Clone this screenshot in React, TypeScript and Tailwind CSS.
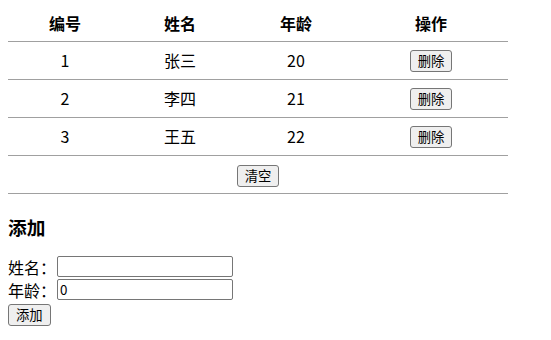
import { useState } from "react";

type Person = { id: number; name: string; age: number };

const INITIAL: Person[] = [
  { id: 1, name: "张三", age: 20 },
  { id: 2, name: "李四", age: 21 },
  { id: 3, name: "王五", age: 22 },
];

const btn =
  "h-[22px] rounded-[3px] border border-[#767676] bg-[#efefef] px-[7px] text-[13.33px] leading-[18px] text-black";

export default function App() {
  const [people, setPeople] = useState<Person[]>(INITIAL);
  const [name, setName] = useState("");
  const [age, setAge] = useState("0");

  function add() {
    if (!name) return;
    const nextId = people.length ? people[people.length - 1].id + 1 : 1;
    setPeople([...people, { id: nextId, name, age: Number(age) || 0 }]);
    setName("");
    setAge("0");
  }

  return (
    <div className="bg-white p-2 text-[16px] text-black [font-family:'Noto_Sans_CJK_SC','Noto_Sans',sans-serif]">
      <table className="w-[500px] table-fixed border-collapse text-center">
        <colgroup>
          <col className="w-[114px]" />
          <col className="w-[116px]" />
          <col className="w-[116px]" />
          <col className="w-[154px]" />
        </colgroup>
        <thead>
          <tr className="h-[33px] border-b border-[#a0a0a0] font-bold leading-[20px]">
            <th className="pb-[2px]">编号</th>
            <th className="pb-[2px]">姓名</th>
            <th className="pb-[2px]">年龄</th>
            <th className="pb-[2px]">操作</th>
          </tr>
        </thead>
        <tbody>
          {people.map((p) => (
            <tr key={p.id} className="h-[38px] border-b border-[#a0a0a0] leading-[20px]">
              <td>{p.id}</td>
              <td>{p.name}</td>
              <td>{p.age}</td>
              <td>
                <button
                  type="button"
                  className={btn}
                  onClick={() => setPeople(people.filter((x) => x.id !== p.id))}
                >
                  删除
                </button>
              </td>
            </tr>
          ))}
          <tr className="h-[38px] border-b border-[#a0a0a0]">
            <td colSpan={4}>
              <button type="button" className={btn} onClick={() => setPeople([])}>
                清空
              </button>
            </td>
          </tr>
        </tbody>
      </table>

      <h3 className="mt-[20px] mb-[17px] text-[18.72px] leading-[25px] font-bold">添加</h3>

      <div className="flex h-[22px] items-center leading-[20px]">
        <span>姓名：</span>
        <input
          value={name}
          onChange={(e) => setName(e.target.value)}
          className="ml-px h-[21px] w-[176px] rounded-[2px] border border-[#767676] px-[2px] text-[13.33px]"
        />
      </div>
      <div className="mt-px flex h-[22px] items-center leading-[20px]">
        <span>年龄：</span>
        <input
          value={age}
          onChange={(e) => setAge(e.target.value)}
          className="ml-px h-[21px] w-[176px] rounded-[2px] border border-[#767676] px-[2px] text-[13.33px]"
        />
      </div>
      <button type="button" className={btn} onClick={add}>
        添加
      </button>
    </div>
  );
}
